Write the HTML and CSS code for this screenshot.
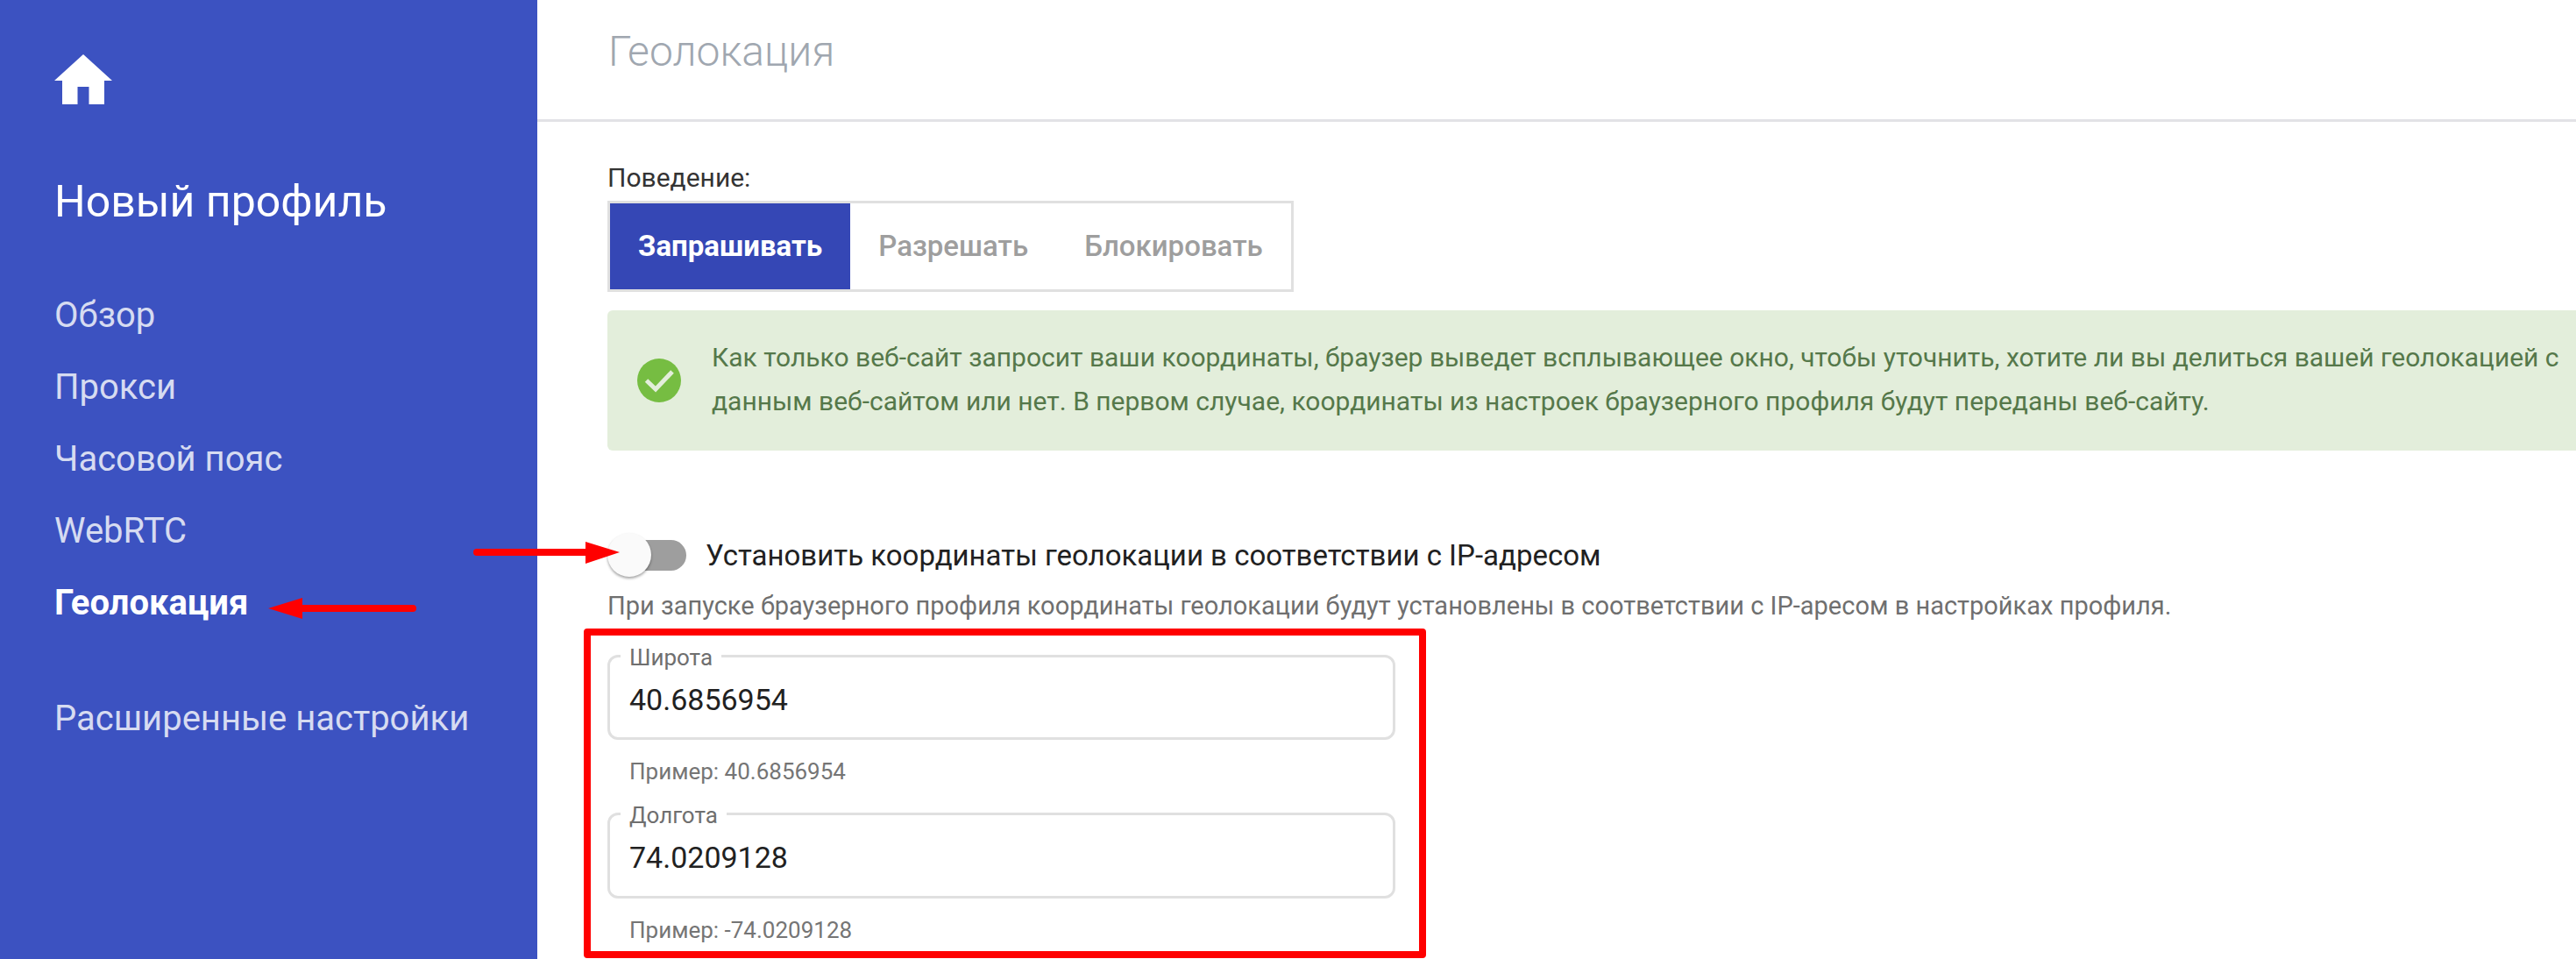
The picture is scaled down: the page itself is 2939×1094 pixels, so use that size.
FILE: index.html
```html
<!DOCTYPE html>
<html lang="ru">
<head>
<meta charset="utf-8">
<title>Геолокация</title>
<link rel="stylesheet" href="styles.css">
</head>
<body>
<div class="app">
  <aside class="sidebar">
    <svg class="home-icon" viewBox="0 0 66 57" width="66" height="57" aria-hidden="true"><path fill="#fff" d="M33 0 66 30H57V57H39.500V37H26.500V57H9V30H0Z"/></svg>
    <h1 class="profile-name">Новый профиль</h1>
    <nav class="nav">
      <a class="nav-item">Обзор</a>
      <a class="nav-item">Прокси</a>
      <a class="nav-item">Часовой пояс</a>
      <a class="nav-item">WebRTC</a>
      <a class="nav-item nav-item-active">Геолокация</a>
      <a class="nav-item nav-item-extra">Расширенные настройки</a>
    </nav>
  </aside>
  <main class="main">
    <header class="page-header"><h2 class="page-title">Геолокация</h2></header>
    <section class="content">
      <div class="behavior-label">Поведение:</div>
      <div class="segmented">
        <button class="segment segment-active">Запрашивать</button>
        <button class="segment">Разрешать</button>
        <button class="segment">Блокировать</button>
      </div>
      <div class="alert">
        <svg class="alert-icon" viewBox="0 0 50 50" width="50" height="50" aria-hidden="true"><circle cx="25" cy="25" r="25" fill="#76bd42"/><path d="M10.500 25 21 35 40 15" fill="none" stroke="#e3eedb" stroke-width="5"/></svg>
        <p class="alert-text">Как только веб-сайт запросит ваши координаты, браузер выведет всплывающее окно, чтобы уточнить, хотите ли вы делиться вашей геолокацией с<br>данным веб-сайтом или нет. В первом случае, координаты из настроек браузерного профиля будут переданы веб-сайту.</p>
      </div>
      <div class="switch-row">
        <span class="switch"><span class="switch-track"></span><span class="switch-knob"></span></span>
        <span class="switch-label">Установить координаты геолокации в соответствии с IP-адресом</span>
      </div>
      <p class="switch-help">При запуске браузерного профиля координаты геолокации будут установлены в соответствии с IP-аресом в настройках профиля.</p>
      <div class="field">
        <span class="field-legend">Широта</span>
        <span class="field-value">40.6856954</span>
      </div>
      <p class="field-help">Пример: 40.6856954</p>
      <div class="field field-second">
        <span class="field-legend">Долгота</span>
        <span class="field-value">74.0209128</span>
      </div>
      <p class="field-help">Пример: -74.0209128</p>
    </section>
  </main>
  <div class="highlight-box"></div>
  <svg class="arrow arrow-toggle" viewBox="0 0 170 26" width="170" height="26" aria-hidden="true"><path d="M4 13H130" stroke="#f00" stroke-width="8" stroke-linecap="round"/><path d="M128 1 167 13 128 26Z" fill="#f00"/></svg>
  <svg class="arrow arrow-nav" viewBox="0 0 170 26" width="170" height="26" aria-hidden="true"><path d="M166 13H40" stroke="#f00" stroke-width="8" stroke-linecap="round"/><path d="M40 1 1 13 40 25Z" fill="#f00"/></svg>
</div>
</body>
</html>
```
FILE: styles.css
```css
* { box-sizing: border-box; }
html, body { margin: 0; height: 100%; overflow: hidden; background: #fff; }
body { font-family: Roboto, "Liberation Sans", sans-serif; color: #212121; }
h1, h2, p { margin: 0; font-weight: 400; }

.app { position: relative; display: flex; width: 2939px; height: 1094px; overflow: hidden; }

.sidebar { flex: 0 0 613px; background: #3c52c1; padding: 62px 0 0 62px; display: flex; flex-direction: column; align-items: flex-start; }
.home-icon { display: block; flex: none; }
.profile-name { margin-top: 81px; font-size: 50px; line-height: 60px; color: #fff; }
.nav { margin-top: 59px; display: flex; flex-direction: column; }
.nav-item { font-size: 40px; line-height: 82px; color: #d6dbf1; }
.nav-item-active { color: #fff; font-weight: 700; }
.nav-item-extra { margin-top: 50px; }

.main { flex: 1; min-width: 0; }
.page-header { height: 139px; border-bottom: 3px solid #e2e2e6; padding-left: 81px; }
.page-title { font-size: 48px; line-height: 117px; font-weight: 300; color: #a0a7b0; }
.content { padding: 44px 0 0 80px; }

.behavior-label { font-size: 30px; line-height: 40px; color: #333; }
.segmented { display: inline-flex; margin-top: 6px; border: 3px solid #e0e0e0; vertical-align: top; }
.segment { height: 98px; border: 0; background: #fff; padding: 0 32px; font: 500 33px/98px Roboto, sans-serif; color: #9e9e9e; }
.segment-active { background: #3547b5; color: #fff; font-weight: 700; }

.alert { display: flex; margin-top: 21px; height: 160px; padding: 29px 0 0 34px; background: #e3eedb; border-radius: 6px 0 0 6px; }
.alert-icon { flex: none; margin: 26px 35px 0 0; }
.alert-text { font-size: 30px; line-height: 50px; color: #55784a; white-space: nowrap; }

.switch-row { display: flex; align-items: center; margin-top: 94px; height: 51px; }
.switch { position: relative; flex: none; width: 90px; height: 51px; }
.switch-track { position: absolute; left: 8px; right: 0; top: 8px; height: 35px; border-radius: 18px; background: #9e9e9e; }
.switch-knob { position: absolute; left: 0; top: 0; width: 50px; height: 50px; border-radius: 50%; background: #fafafa; box-shadow: 0 2px 3px rgba(0,0,0,.35); }
.switch-label { margin-left: 22px; font-size: 33px; color: #212121; }
.switch-help { margin-top: 12px; font-size: 29px; line-height: 40px; color: #6f6f6f; }

.field { position: relative; margin-top: 36px; width: 899px; height: 97px; border: 3px solid #e0e0e0; border-radius: 12px; padding: 23px 0 0 22px; }
.field-second { margin-top: 32px; height: 98px; }
.field-legend { position: absolute; left: 12px; top: -15px; padding: 0 10px; background: #fff; font-size: 26px; line-height: 30px; color: #6f6f6f; }
.field-value { display: block; font-size: 34px; line-height: 50px; color: #212121; }
.field-help { margin-top: 21px; padding-left: 25px; font-size: 26px; line-height: 30px; color: #757575; }

.highlight-box { position: absolute; left: 666px; top: 717px; width: 961px; height: 376px; border: 8px solid #f00; border-radius: 4px; pointer-events: none; }
.arrow { position: absolute; display: block; }
.arrow-toggle { left: 540px; top: 617px; }
.arrow-nav { left: 305px; top: 681px; }
```
